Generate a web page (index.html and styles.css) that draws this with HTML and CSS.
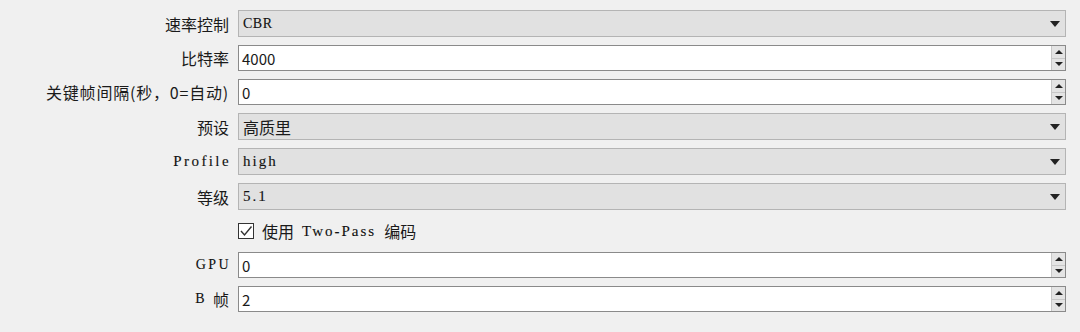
FILE: index.html
```html
<!DOCTYPE html>
<html lang="zh-CN">
<head>
  <meta charset="UTF-8">
  <title>编码设置</title>
  <link rel="stylesheet" href="styles.css">
</head>
<body>
  <!--编码器设置表单-->
  <div class="form">
    <div class="label">速率控制</div>
    <div class="combo"><span class="value latin caps">CBR</span><span class="arrow"></span></div>

    <div class="label">比特率</div>
    <div class="spin"><span class="value">4000</span><span class="btns"><i class="up"></i><i class="down"></i></span></div>

    <div class="label wide">关键帧间隔(秒，0=自动)</div>
    <div class="spin"><span class="value">0</span><span class="btns"><i class="up"></i><i class="down"></i></span></div>

    <div class="label">预设</div>
    <div class="combo"><span class="value cjk">高质里</span><span class="arrow"></span></div>

    <div class="label latin">Profile</div>
    <div class="combo"><span class="value latin">high</span><span class="arrow"></span></div>

    <div class="label">等级</div>
    <div class="combo"><span class="value latin">5.1</span><span class="arrow"></span></div>

    <div class="label"></div>
    <label class="check">
      <span class="box"><svg width="14" height="12" viewBox="0 0 14 12"><path d="M2 6 L5.5 10 L12.5 1.5" fill="none" stroke="#333" stroke-width="1.4"/></svg></span>
      <span class="cjk">使用</span>
      <span class="latin">Two-Pass</span>
      <span class="cjk">编码</span>
    </label>

    <div class="label latin caps">GPU</div>
    <div class="spin"><span class="value">0</span><span class="btns"><i class="up"></i><i class="down"></i></span></div>

    <div class="label gap"><span class="latin caps">B</span><span>帧</span></div>
    <div class="spin"><span class="value">2</span><span class="btns"><i class="up"></i><i class="down"></i></span></div>
  </div>
</body>
</html>
```
FILE: styles.css
```css
*{box-sizing: border-box;}
body{
  margin:0;
  background:#f0f0f0;
  font-family:"Noto Sans CJK SC", "Noto Sans", sans-serif;
  font-size:16px;
  color:#1a1a1a;
}
.latin{
  font-family:"Liberation Serif", "Noto Sans CJK SC", serif;
  font-size:15px;
  letter-spacing:2px;
  color:#111;
  -webkit-text-stroke:0.12px #111;
}
.latin.caps{letter-spacing:0.5px; font-size:14px;}
.cjk{font-size:16px;}
.form{
  display:grid;
  grid-template-columns:229px 1fr;
  grid-template-rows:27px 26px 26px 27px 27px 27px 26px 26px 26px;
  column-gap:9px;
  row-gap:8px;
  padding:10px 14px 0 0;
}
.label{
  display:flex;
  align-items:center;
  justify-content:flex-end;
  white-space:nowrap;
}
.label.wide{letter-spacing:0.8px;}
.label.latin{letter-spacing:2.4px; margin-right:-2px;}
.label.gap{gap:8px;}

/*콤보박스*/
.combo{
  display:flex;
  align-items:center;
  background:#e1e1e1;
  border:1px solid #b4b4b4;
  padding:0 0 0 4px;
  font-size:15px;
}
.combo .value{flex:1;}
.arrow{
  width:0; height:0;
  margin-right:5px;
  border-left:5px solid transparent;
  border-right:5px solid transparent;
  border-top:6px solid #222;
}

/*스핀박스*/
.spin{
  display:flex;
  background:#fff;
  border:1px solid #8a8a8a;
  padding-left:3px;
  font-size:15px;
}
.spin .value{
  flex:1;
  display:flex;
  align-items:center;
}
.btns{
  width:14px;
  display:flex;
  flex-direction:column;
  background:#e4e4e4;
  border-left:1px solid #c8c8c8;
}
.btns i{
  flex:1;
  display:flex;
  align-items:center;
  justify-content:center;
}
.btns i.up{border-bottom:1px solid #c8c8c8;}
.btns i::after{
  content:"";
  width:0; height:0;
  border-left:4px solid transparent;
  border-right:4px solid transparent;
}
.btns i.up::after{border-bottom:4px solid #222;}
.btns i.down::after{border-top:4px solid #222;}

/*체크박스*/
.check{
  display:flex;
  align-items:center;
  gap:8px;
}
.box{
  width:16px; height:16px;
  border:1px solid #333;
  background:#fff;
  display:flex;
  align-items:center;
  justify-content:center;
}
```
